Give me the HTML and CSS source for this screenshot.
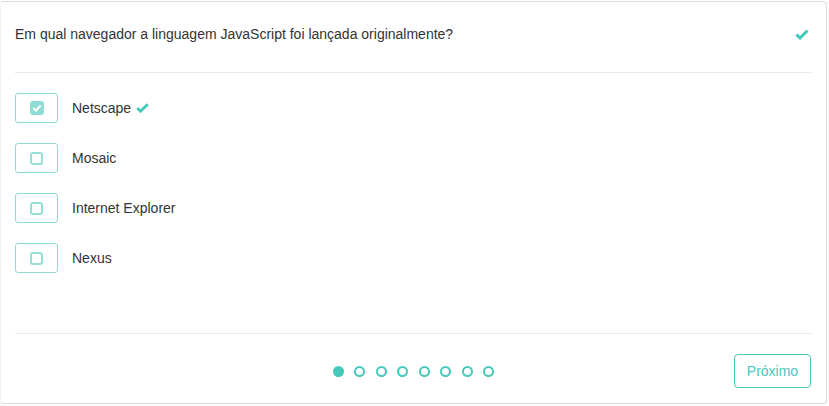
FILE: index.html
```html
<!DOCTYPE html>
<html lang="pt">
<head>
<meta charset="utf-8">
<link rel="stylesheet" href="styles.css">
</head>
<body>
<div class="card">
  <div class="header">
    <span class="question">Em qual navegador a linguagem JavaScript foi lançada originalmente?</span>
    <svg class="tick" width="14" height="11" viewBox="0 0 14 11"><path d="M1.5 5.5 L5 9 L12.5 1.5" fill="none" stroke="#3ec9b9" stroke-width="3"/></svg>
  </div>
  <div class="options">
    <div class="option">
      <div class="box"><span class="cb checked"><svg width="10" height="8" viewBox="0 0 10 8"><path d="M1.3 4 L4 6.5 L8.7 1.5" fill="none" stroke="#fff" stroke-width="2.2"/></svg></span></div>
      <span class="label">Netscape</span>
      <svg class="tick small" width="13" height="10" viewBox="0 0 13 10"><path d="M1.2 5 L4.5 8.2 L11.8 1.2" fill="none" stroke="#3ec9b9" stroke-width="2.8"/></svg>
    </div>
    <div class="option">
      <div class="box"><span class="cb"></span></div>
      <span class="label">Mosaic</span>
    </div>
    <div class="option">
      <div class="box"><span class="cb"></span></div>
      <span class="label">Internet Explorer</span>
    </div>
    <div class="option">
      <div class="box"><span class="cb"></span></div>
      <span class="label">Nexus</span>
    </div>
  </div>
  <div class="footer">
    <div class="dots">
      <span class="dot active"></span>
      <span class="dot"></span>
      <span class="dot"></span>
      <span class="dot"></span>
      <span class="dot"></span>
      <span class="dot"></span>
      <span class="dot"></span>
      <span class="dot"></span>
    </div>
    <button class="next">Próximo</button>
  </div>
</div>
</body>
</html>
```

FILE: styles.css
```css
* { box-sizing: border-box; }
html, body { margin: 0; padding: 0; background: #fff; }
body {
  font-family: "Liberation Sans", Arial, sans-serif;
  font-size: 14px;
  color: #333;
  padding-top: 1px;
}
.card {
  width: 827px;
  height: 403px;
  border: 1px solid #dcdcdc;
  border-left-color: #f3f3f3;
  border-radius: 4px;
  box-shadow: 0 1px 2px rgba(0,0,0,0.06);
  padding: 0 15px 0 14px;
  display: flex;
  flex-direction: column;
}
.header {
  display: flex;
  align-items: center;
  justify-content: space-between;
  padding: 22px 2px 28px 0;
  border-bottom: 1px solid #e8e8e8;
  line-height: 20px;
}
.options {
  padding-top: 20px;
  display: flex;
  flex-direction: column;
  gap: 20px;
  height: 261px;
  border-bottom: 1px solid #e8e8e8;
}
.option {
  display: flex;
  align-items: center;
  height: 30px;
}
.box {
  width: 43px;
  height: 30px;
  border: 1px solid #8fdcd3;
  border-radius: 3px;
  display: flex;
  align-items: center;
  justify-content: center;
  margin-right: 14px;
}
.cb {
  width: 13px;
  height: 13px;
  border: 2px solid #94e0d7;
  border-radius: 3px;
  display: flex;
  align-items: center;
  justify-content: center;
}
.cb.checked {
  width: 14px;
  height: 14px;
  background: #8fddd4;
  border-color: #8fddd4;
}
.label { line-height: 20px; }
.tick.small { margin-left: 5px; }
.footer {
  position: relative;
  display: flex;
  justify-content: flex-end;
  padding-top: 20px;
}
.dots {
  position: absolute;
  left: 1px;
  right: 0;
  top: 32px;
  display: flex;
  justify-content: center;
  gap: 10.5px;
}
.dot {
  width: 11px;
  height: 11px;
  border-radius: 50%;
  border: 2px solid #45c9ba;
}
.dot.active { background: #45c9ba; }
.next {
  width: 77px;
  height: 34px;
  border: 1px solid #45c9ba;
  border-radius: 4px;
  background: #fff;
  color: #45c9ba;
  font-family: "Liberation Sans", Arial, sans-serif;
  font-size: 14px;
  padding: 0;
}
```
